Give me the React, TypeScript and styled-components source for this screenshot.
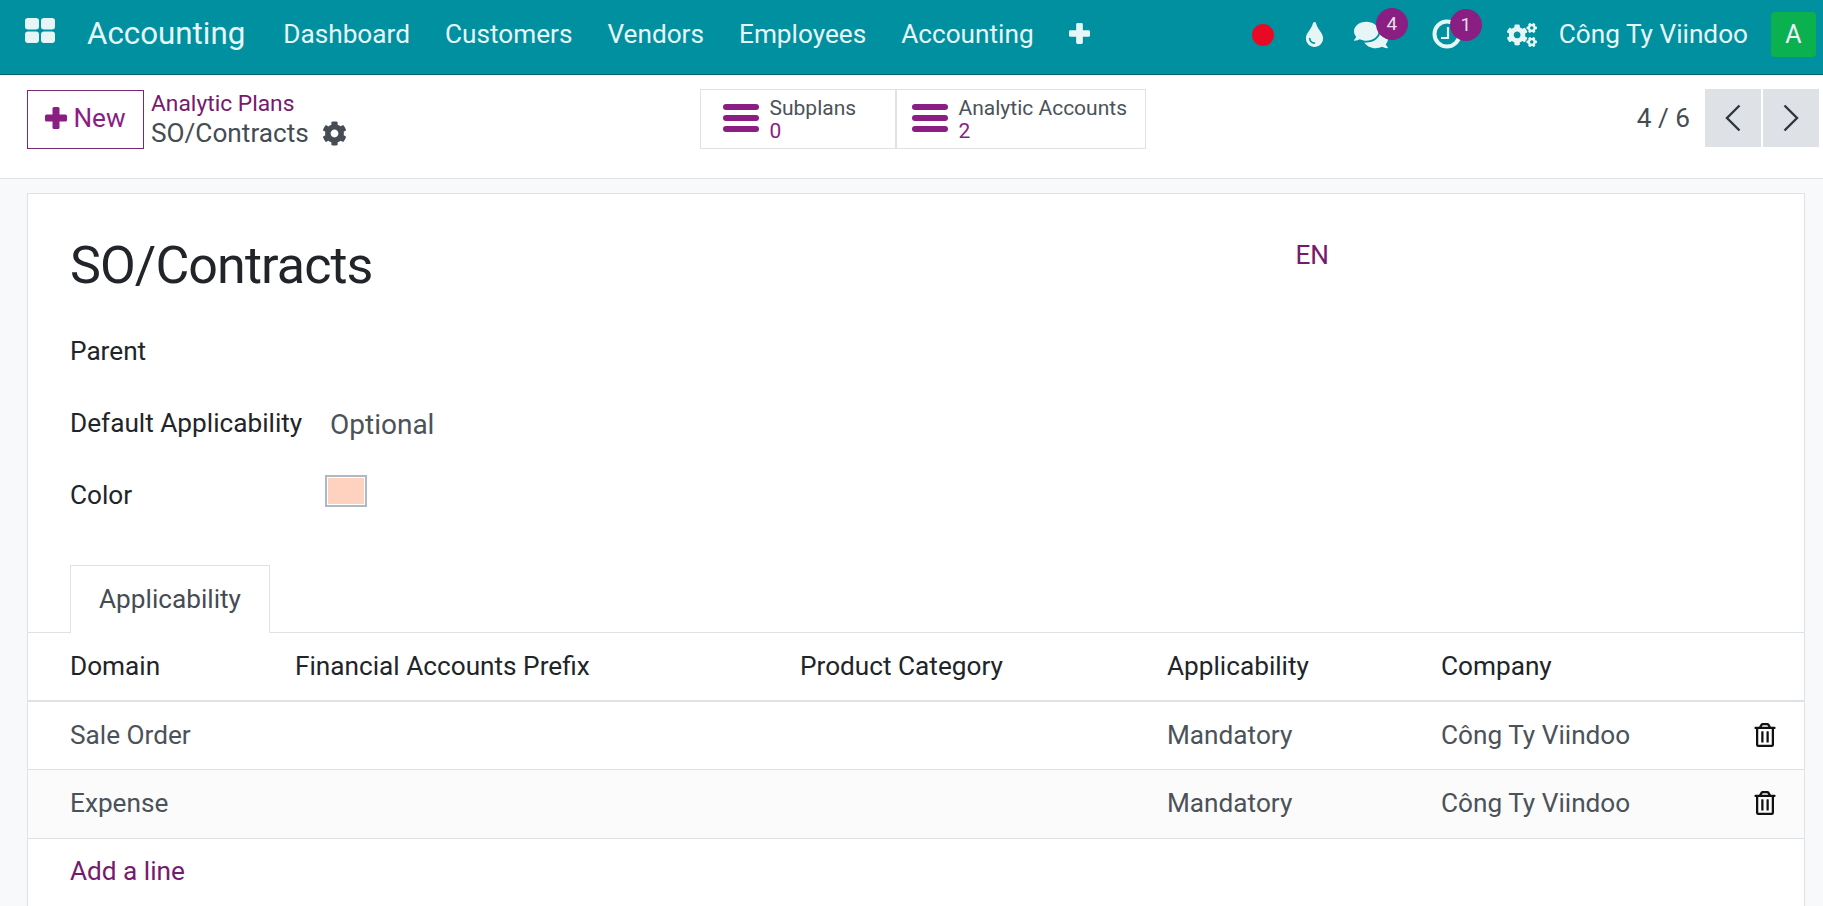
import { createGlobalStyle, styled } from 'styled-components'
import { FaTint, FaComments, FaCogs, FaCog, FaRegTrashAlt } from 'react-icons/fa'

const GlobalStyle = createGlobalStyle`
  html, body {
    margin: 0;
    height: 100%;
    overflow: hidden;
    background: #f8f9fb;
    font-family: Roboto, "Liberation Sans", sans-serif;
    color: #212529;
  }
`

const Page = styled.div`
  height: 906px;
  overflow: hidden;
  display: flex;
  flex-direction: column;
`

const NavBar = styled.header`
  height: 75px;
  box-sizing: border-box;
  flex: none;
  display: flex;
  align-items: center;
  padding: 0 7px 5px 25px;
  background: #00909f;
  border-bottom: 1px solid #04636e;
  color: #e6f6f7;
`

const AppsIcon = styled.svg`
  width: 30px;
  height: 25px;
  margin: 0 32px 8px 0;
  fill: #e6f6f7;
`

const Brand = styled.span`
  font-size: 31.3px;
  margin: 0 38px 3px 0;
`

const NavLink = styled.span`
  font-size: 26.2px;
  margin: 0 35px 1px 0;
`

const NavPlus = styled.span`
  display: flex;
  margin-bottom: 3px;
`

const NavTools = styled.div`
  margin-left: auto;
  display: flex;
  align-items: center;
`

const RecordDot = styled.span`
  width: 22px;
  height: 22px;
  border-radius: 50%;
  background: #e80a25;
  margin-right: 28px;
`

const ToolIcon = styled.span<{ $gap: number }>`
  position: relative;
  display: flex;
  align-items: center;
  margin-right: ${(p) => p.$gap}px;
  font-size: 24px;
`

const Badge = styled.span`
  position: absolute;
  top: -10px;
  right: -20px;
  width: 32px;
  height: 32px;
  border-radius: 50%;
  background: #8a1e82;
  color: #e8dfe8;
  font-size: 19px;
  display: flex;
  align-items: center;
  justify-content: center;
`

const UserName = styled.span`
  font-size: 26.2px;
  margin: 0 23px 1px 0;
`

const Avatar = styled.span`
  width: 45px;
  height: 45px;
  border-radius: 4px;
  background: #0bb04f;
  color: #eef;
  font-size: 25px;
  display: flex;
  align-items: center;
  justify-content: center;
`

const ControlPanel = styled.div`
  height: 104px;
  box-sizing: border-box;
  flex: none;
  background: #fff;
  border-bottom: 1px solid #dfe2e7;
  display: grid;
  grid-template-columns: 1fr auto 1fr;
  padding: 15px 4px 0 27px;
  align-items: start;
`

const PanelLeft = styled.div`
  display: flex;
  gap: 7px;
`

const NewButton = styled.button`
  width: 117px;
  height: 59px;
  box-sizing: border-box;
  background: #fff;
  border: 1px solid #7a2a75;
  color: #8a1e82;
  font: inherit;
  font-size: 26.2px;
  display: flex;
  align-items: center;
  justify-content: center;
  gap: 6px;
  padding: 0 0 4px;
`

const Crumbs = styled.div`
  display: flex;
  flex-direction: column;
  padding-top: 1px;
`

const CrumbLink = styled.span`
  font-size: 22.8px;
  line-height: 25px;
  color: #761a6e;
`

const CrumbCurrent = styled.span`
  font-size: 26.2px;
  line-height: 34px;
  color: #454c53;
  display: flex;
  align-items: center;
  gap: 13px;
`

const StatGroup = styled.div`
  display: flex;
  margin: -1px 0 0 -1px;
`

const StatButton = styled.div<{ $width: number; $pad: number }>`
  width: ${(p) => p.$width}px;
  height: 60px;
  box-sizing: border-box;
  border: 1px solid #dee2e6;
  display: flex;
  align-items: center;
  padding-left: ${(p) => p.$pad}px;
  gap: 11px;
`

const StatIcon = styled.svg`
  width: 36px;
  height: 30px;
  margin-bottom: 2px;
  fill: #8a1e82;
`

const StatText = styled.div`
  display: flex;
  flex-direction: column;
  padding-top: 2px;
  font-size: 21px;
  line-height: 23px;
  color: #4b5259;
`

const StatValue = styled.span`
  color: #8a1e82;
`

const Pager = styled.div`
  justify-self: end;
  display: flex;
  align-items: center;
  gap: 2px;
  margin-top: -1px;
`

const PagerText = styled.span`
  font-size: 26.2px;
  color: #454c53;
  margin-right: 13px;
`

const PagerButton = styled.div`
  width: 56px;
  height: 58px;
  background: #dee2e6;
  display: flex;
  align-items: center;
  justify-content: center;
`

const Chevron = styled.svg`
  width: 20px;
  height: 30px;
  fill: none;
  stroke: #30363c;
  stroke-width: 2.4;
`

const Content = styled.main`
  flex: 1;
  padding: 14px 18px 0 27px;
  display: flex;
  min-height: 0;
`

const Sheet = styled.section`
  flex: 1;
  background: #fff;
  border: 1px solid #dfe2e7;
  border-bottom: none;
`

const SheetHead = styled.div`
  display: flex;
  justify-content: space-between;
  padding: 41px 0 0 42px;
`

const Title = styled.h1`
  margin: 0;
  font-size: 52px;
  font-weight: 400;
  line-height: 62px;
  letter-spacing: -0.9px;
  color: #212529;
`

const LangTag = styled.span`
  font-size: 26.2px;
  color: #761a6e;
  margin: 5px 475px 0 0;
`

const Fields = styled.div`
  padding: 18px 0 0 42px;
  display: flex;
  flex-direction: column;
`

const FieldRow = styled.div`
  height: 72px;
  display: flex;
  align-items: center;
`

const FieldLabel = styled.label`
  width: 260px;
  font-size: 26.2px;
  color: #212529;
`

const FieldValue = styled.span`
  font-size: 28px;
  color: #4b5259;
  padding-top: 2px;
`

const Swatch = styled.span`
  width: 38px;
  height: 28px;
  box-sizing: border-box;
  background: #ffd2c0;
  border: 1px solid #fff;
  outline: 2px solid #b0b8c4;
  margin: 0 0 8px -3px;
`

const TabBar = styled.div`
  display: flex;
  margin-top: 34px;
  padding-left: 42px;
  border-bottom: 1px solid #dee2e6;
`

const Tab = styled.div`
  width: 200px;
  height: 68px;
  box-sizing: border-box;
  border: 1px solid #dee2e6;
  border-bottom: none;
  margin-bottom: -1px;
  padding-bottom: 2px;
  background: #fff;
  font-size: 26.2px;
  color: #454c53;
  display: flex;
  align-items: center;
  justify-content: center;
`

const rowHeights = { head: 69, odd: 68, even: 69 }

const GridRow = styled.div<{ $kind: 'head' | 'even' | 'odd' }>`
  display: grid;
  grid-template-columns: 225px 505px 367px 274px 1fr 51px;
  align-items: center;
  box-sizing: border-box;
  height: ${(p) => rowHeights[p.$kind]}px;
  padding: 0 0 2px 42px;
  font-size: 26.2px;
  color: ${(p) => (p.$kind === 'head' ? '#212529' : '#4b5259')};
  background: ${(p) => (p.$kind === 'even' ? '#fbfbfc' : '#fff')};
  border-bottom: ${(p) => (p.$kind === 'head' ? 2 : 1)}px solid #dee2e6;
`

const TrashCell = styled.span`
  display: flex;
  color: #111;
  font-size: 24px;
`

const AddLine = styled.div`
  padding: 17px 0 0 42px;
  font-size: 26.2px;
  color: #761a6e;
`

const rows = [
  { domain: 'Sale Order', kind: 'odd' as const },
  { domain: 'Expense', kind: 'even' as const },
]

const ListBars = () => (
  <StatIcon viewBox="0 0 36 30">
    <rect x="0" y="1" width="36" height="6" rx="3" />
    <rect x="0" y="12" width="36" height="6" rx="3" />
    <rect x="0" y="23" width="36" height="6" rx="3" />
  </StatIcon>
)

// chunky plus, heavier than the one in the icon packs
const ThickPlus = ({ size }: { size: number }) => (
  <svg width={size} height={size} viewBox="0 0 22 22" fill="currentColor">
    <rect x="7.5" y="0" width="7" height="22" rx="1.5" />
    <rect x="0" y="7.5" width="22" height="7" rx="1.5" />
  </svg>
)

const App = () => {
  return (
    <Page>
      <GlobalStyle />
      <NavBar>
        <AppsIcon viewBox="0 0 30 25">
          <rect x="0" y="0" width="14" height="11.5" rx="3" />
          <rect x="16" y="0" width="14" height="11.5" rx="3" />
          <rect x="0" y="13.5" width="14" height="11.5" rx="3" />
          <rect x="16" y="13.5" width="14" height="11.5" rx="3" />
        </AppsIcon>
        <Brand>Accounting</Brand>
        <NavLink>Dashboard</NavLink>
        <NavLink>Customers</NavLink>
        <NavLink>Vendors</NavLink>
        <NavLink>Employees</NavLink>
        <NavLink>Accounting</NavLink>
        <NavPlus>
          <ThickPlus size={21} />
        </NavPlus>
        <NavTools>
          <RecordDot />
          <ToolIcon $gap={27}>
            <FaTint size={25} />
          </ToolIcon>
          <ToolIcon $gap={44}>
            <FaComments size={34} />
            <Badge>4</Badge>
          </ToolIcon>
          <ToolIcon $gap={45}>
            <svg width="30" height="32" viewBox="0 0 30 32" fill="none" stroke="#e6f6f7">
              <circle cx="15" cy="15" r="12.5" strokeWidth="4" />
              <path d="M16 8v11H9" strokeWidth="2.2" />
            </svg>
            <Badge>1</Badge>
          </ToolIcon>
          <ToolIcon $gap={22}>
            <FaCogs size={30} />
          </ToolIcon>
          <UserName>Công Ty Viindoo</UserName>
          <Avatar>A</Avatar>
        </NavTools>
      </NavBar>
      <ControlPanel>
        <PanelLeft>
          <NewButton>
            <ThickPlus size={22} />
            New
          </NewButton>
          <Crumbs>
            <CrumbLink>Analytic Plans</CrumbLink>
            <CrumbCurrent>
              SO/Contracts
              <FaCog size={25} />
            </CrumbCurrent>
          </Crumbs>
        </PanelLeft>
        <StatGroup>
          <StatButton $width={196} $pad={22}>
            <ListBars />
            <StatText>
              Subplans
              <StatValue>0</StatValue>
            </StatText>
          </StatButton>
          <StatButton $width={250} $pad={15}>
            <ListBars />
            <StatText>
              Analytic Accounts
              <StatValue>2</StatValue>
            </StatText>
          </StatButton>
        </StatGroup>
        <Pager>
          <PagerText>4 / 6</PagerText>
          <PagerButton>
            <Chevron viewBox="0 0 20 30">
              <path d="M16.5 2.5 4 15l12.5 12.5" />
            </Chevron>
          </PagerButton>
          <PagerButton>
            <Chevron viewBox="0 0 20 30">
              <path d="M3.5 2.5 16 15 3.5 27.5" />
            </Chevron>
          </PagerButton>
        </Pager>
      </ControlPanel>
      <Content>
        <Sheet>
          <SheetHead>
            <Title>SO/Contracts</Title>
            <LangTag>EN</LangTag>
          </SheetHead>
          <Fields>
            <FieldRow>
              <FieldLabel>Parent</FieldLabel>
            </FieldRow>
            <FieldRow>
              <FieldLabel>Default Applicability</FieldLabel>
              <FieldValue>Optional</FieldValue>
            </FieldRow>
            <FieldRow>
              <FieldLabel>Color</FieldLabel>
              <Swatch />
            </FieldRow>
          </Fields>
          <TabBar>
            <Tab>Applicability</Tab>
          </TabBar>
          <GridRow $kind="head">
            <span>Domain</span>
            <span>Financial Accounts Prefix</span>
            <span>Product Category</span>
            <span>Applicability</span>
            <span>Company</span>
            <span />
          </GridRow>
          {rows.map((row) => (
            <GridRow key={row.domain} $kind={row.kind}>
              <span>{row.domain}</span>
              <span />
              <span />
              <span>Mandatory</span>
              <span>Công Ty Viindoo</span>
              <TrashCell>
                <FaRegTrashAlt />
              </TrashCell>
            </GridRow>
          ))}
          <AddLine>Add a line</AddLine>
        </Sheet>
      </Content>
    </Page>
  )
}

export default App
